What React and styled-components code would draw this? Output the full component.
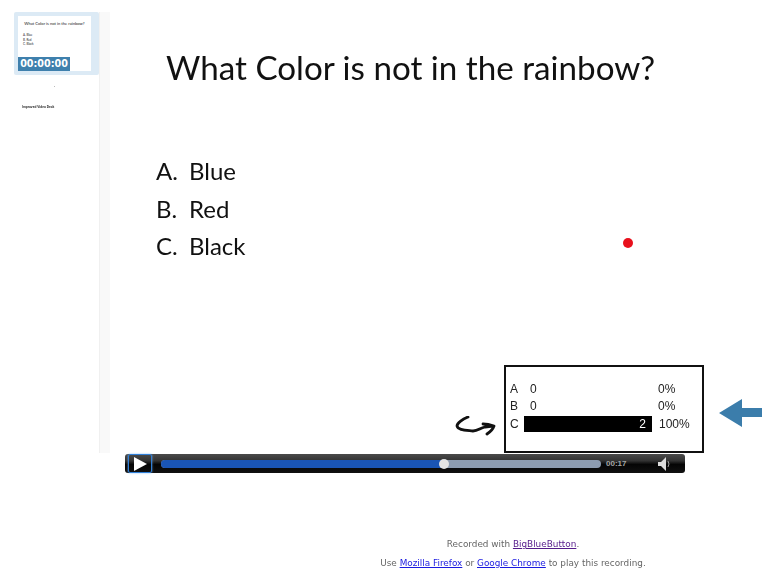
import styled, { createGlobalStyle } from 'styled-components'

const GlobalStyle = createGlobalStyle`
  html, body {
    margin: 0;
    padding: 0;
    background: #fff;
  }
`

const Page = styled.div`
  width: 781px;
  height: 588px;
  padding-top: 12px;
  box-sizing: border-box;
  overflow: hidden;
  font-family: "Liberation Sans", sans-serif;
  filter: blur(0.35px);
`

const Stage = styled.div`
  display: flex;
  height: 441px;
  padding-left: 14px;
`

const Sidebar = styled.div`
  position: relative;
  width: 85px;
`

const ThumbFrame = styled.div`
  height: 63px;
  padding: 4px 8px 4px 4px;
  box-sizing: border-box;
  background: #dceaf5;
  border-radius: 2px;
`

const Thumb = styled.div`
  position: relative;
  height: 100%;
  background: #fff;
  font-family: Lato, sans-serif;
  color: #222;
`

const ThumbTitle = styled.div`
  padding-top: 5px;
  font-size: 4.1px;
  line-height: 6px;
  text-align: center;
`

const ThumbOptions = styled.div`
  padding: 6px 0 0 5px;
  font-size: 3px;
  line-height: 4.7px;
`

const Timer = styled.div`
  position: absolute;
  left: 0;
  bottom: 0;
  width: 52px;
  height: 14px;
  background: #3f80ad;
  color: #fff;
  font-family: "DejaVu Sans", sans-serif;
  font-size: 9.6px;
  font-weight: 700;
  line-height: 14px;
  text-align: center;
`

const Speck = styled.div`
  position: absolute;
  left: 40px;
  top: 74px;
  width: 1px;
  height: 1px;
  background: #bbb;
`

const ThumbCaption = styled.div`
  padding: 30px 0 0 8px;
  font-size: 3.2px;
  font-weight: 700;
  color: #222;
`

const ScrollStrip = styled.div`
  width: 10px;
  background: #f9f9f9;
  border-left: 1px solid #f0f0f0;
`

const Slide = styled.div`
  position: relative;
  flex: 1;
  display: flex;
  flex-direction: column;
  font-family: Lato, sans-serif;
  color: #111;
`

const Title = styled.h1`
  margin: 33px 0 0 56px;
  font-size: 33.2px;
  font-weight: 400;
  line-height: 44px;
`

const Options = styled.ol`
  margin: 63px 0 0 46px;
  padding: 0;
  list-style: none;
`

const Option = styled.li`
  display: flex;
  height: 37.5px;
  font-size: 24px;
  line-height: 37.5px;
`

const OptionKey = styled.span`
  width: 33px;
`

const Pointer = styled.div`
  position: absolute;
  left: 513px;
  top: 226px;
  width: 10px;
  height: 10px;
  border-radius: 50%;
  background: #e8101c;
`

const PollRow = styled.div`
  margin-top: auto;
  display: flex;
  align-items: flex-end;
  padding-left: 345px;
`

const Squiggle = styled.svg`
  width: 42px;
  height: 20px;
  margin: 0 7px 17px 0;
`

const PollBox = styled.div`
  width: 200px;
  height: 88px;
  padding: 13px 4px 0 4px;
  box-sizing: border-box;
  border: 2px solid #111;
  font-family: "Liberation Sans", sans-serif;
  font-size: 12px;
  color: #222;
`

const PollLine = styled.div`
  display: grid;
  grid-template-columns: 14px 128px 1fr;
  align-items: center;
  height: 17.5px;
`

const PollCount = styled.span`
  padding-left: 6px;
`

const Bar = styled.div`
  height: 16px;
  padding-right: 6px;
  background: #000;
  color: #fff;
  line-height: 16px;
  text-align: right;
`

const PollPercent = styled.span`
  padding-left: ${({ $filled }) => ($filled ? '7px' : '6px')};
`

const BlueArrow = styled.svg`
  width: 43px;
  height: 28px;
  margin: 0 0 26px 15px;
`

const Player = styled.div`
  display: flex;
  align-items: center;
  width: 560px;
  height: 19px;
  margin: 1px 0 0 125px;
  border-radius: 3px;
  background: linear-gradient(#4a4a4a 0%, #333 35%, #050505 55%, #111 100%);
`

const PlayButton = styled.div`
  display: flex;
  align-items: center;
  justify-content: center;
  width: 24px;
  height: 19px;
  margin-left: 3px;
  box-sizing: border-box;
  border: 1px solid #2f7fd8;
  border-radius: 2px;
  box-shadow: 0 0 2px #7db8f5;
`

const Track = styled.div`
  position: relative;
  width: 440px;
  height: 8px;
  margin-left: 9px;
  border-radius: 4px;
  background: #8d9cb0;
`

const Progress = styled.div`
  height: 100%;
  border-radius: 4px 0 0 4px;
  background: #1a55b5;
`

const Knob = styled.div`
  position: absolute;
  top: -1px;
  width: 10px;
  height: 10px;
  margin-left: -5px;
  border-radius: 50%;
  background: #e4e4e4;
`

const Time = styled.span`
  width: 22px;
  margin-left: 5px;
  color: #a5a5a5;
  font-size: 8px;
  font-weight: 700;
`

const Volume = styled.svg`
  width: 16px;
  height: 16px;
  margin-left: 29px;
`

const Footer = styled.footer`
  width: 781px;
  padding: 66px 0 0 245px;
  box-sizing: border-box;
  color: #666;
  font-family: "DejaVu Sans", sans-serif;
  font-size: 8.87px;
  text-align: center;
`

const FooterLine = styled.p`
  margin: 0 0 9px;
  line-height: 10px;
`

const FooterLink = styled.a`
  color: ${({ $visited }) => ($visited ? '#551a8b' : '#1a1ae0')};
  text-decoration: underline;
`

const options = [['A.', 'Blue'], ['B.', 'Red'], ['C.', 'Black']]

const App = () => {
  const progress = 283 / 440

  return (
    <Page>
      <GlobalStyle />
      <Stage>
        <Sidebar>
          <ThumbFrame>
            <Thumb>
              <ThumbTitle>What Color is not in the rainbow?</ThumbTitle>
              <ThumbOptions>
                <div>A. Blue</div>
                <div>B. Red</div>
                <div>C. Black</div>
              </ThumbOptions>
              <Timer>00:00:00</Timer>
            </Thumb>
          </ThumbFrame>
          <Speck />
          <ThumbCaption>Improved Video Deck</ThumbCaption>
        </Sidebar>
        <ScrollStrip />
        <Slide>
          <Title>What Color is not in the rainbow?</Title>
          <Options>
            {options.map(([key, label]) => (
              <Option key={key}>
                <OptionKey>{key}</OptionKey>
                {label}
              </Option>
            ))}
          </Options>
          <Pointer />
          <PollRow>
            <Squiggle viewBox="0 0 42 20">
              <path d="M13 1 C8 3 2 7 2 10 C3 14 9 14 18 15 C23 15 25 12 30 11 L38 10 M28 8 C32 8 36 9 39 10 C38 13 35 16 32 18" fill="none" stroke="#111" strokeWidth="2.8" strokeLinecap="round" strokeLinejoin="round" />
            </Squiggle>
            <PollBox>
              <PollLine>
                <span>A</span>
                <PollCount>0</PollCount>
                <PollPercent>0%</PollPercent>
              </PollLine>
              <PollLine>
                <span>B</span>
                <PollCount>0</PollCount>
                <PollPercent>0%</PollPercent>
              </PollLine>
              <PollLine>
                <span>C</span>
                <Bar>2</Bar>
                <PollPercent $filled>100%</PollPercent>
              </PollLine>
            </PollBox>
            <BlueArrow viewBox="0 0 43 28">
              <path d="M0 14 L23 0 L23 9 L43 9 L43 18 L23 18 L23 28 Z" fill="#3b7dab" />
            </BlueArrow>
          </PollRow>
        </Slide>
      </Stage>
      <Player>
        <PlayButton>
          <svg width="13" height="14" viewBox="0 0 13 14">
            <path d="M0 0 L13 7 L0 14 Z" fill="#fff" />
          </svg>
        </PlayButton>
        <Track>
          <Progress style={{ width: `${progress * 100}%` }} />
          <Knob style={{ left: `${progress * 100}%` }} />
        </Track>
        <Time>00:17</Time>
        <Volume viewBox="0 0 16 16">
          <path d="M1 6 H4 L9 1 V15 L4 10 H1 Z" fill="#dcdcdc" />
          <path d="M11 5 Q13 8 11 11" fill="none" stroke="#999" strokeWidth="1" />
        </Volume>
      </Player>
      <Footer>
        <FooterLine>
          Recorded with <FooterLink $visited href="#">BigBlueButton</FooterLink>.
        </FooterLine>
        <FooterLine>
          Use <FooterLink href="#">Mozilla Firefox</FooterLink> or <FooterLink href="#">Google Chrome</FooterLink> to play this recording.
        </FooterLine>
      </Footer>
    </Page>
  )
}

export default App
